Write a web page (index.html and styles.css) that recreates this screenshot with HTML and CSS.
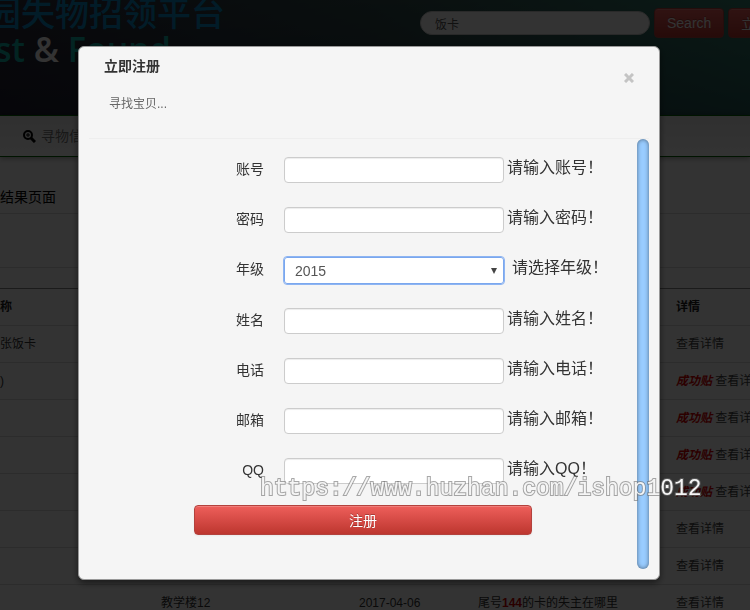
FILE: index.html
```
<!DOCTYPE html>
<html lang="zh-CN">
<head>
  <meta charset="UTF-8">
  <meta name="viewport" content="width=device-width, initial-scale=1.0">
  <title>校园失物招领平台</title>
  <link rel="stylesheet" href="styles.css">
</head>
<body>
  <div class="page">
    <div class="header">
      <div class="logo">
        <div class="logo-cn">园失物招领平台</div>
        <div class="logo-en">st <span>&amp;</span> Found</div>
      </div>
      <form class="search">
        <input type="text" class="search-input" aria-label="搜索" value="饭卡">
        <button type="button" class="btn">Search</button>
        <button type="button" class="btn">立即注册</button>
      </form>
    </div>

    <div class="nav">
      <a href="#">
        <svg width="13" height="13" viewBox="0 0 13 13" fill="none" stroke="#000" stroke-width="2">
          <circle cx="5" cy="5" r="4"/>
          <path d="M8 8l4 4" stroke-width="3"/>
          <path d="M5 3v4M3 5h4" stroke-width="1"/>
        </svg>
        寻物信息
      </a>
    </div>

    <h3 class="page-title">结果页面</h3>
    <div class="filter"></div>

    <table class="list">
      <thead>
        <tr><th class="col-name">称</th><th class="col-place"></th><th class="col-date"></th><th class="col-title"></th><th>详情</th></tr>
      </thead>
      <tbody>
        <tr><td>张饭卡</td><td></td><td></td><td></td><td><a href="#">查看详情</a></td></tr>
        <tr><td>)</td><td></td><td></td><td></td><td><em>成功贴</em> <a href="#">查看详情</a></td></tr>
        <tr><td></td><td></td><td></td><td></td><td><em>成功贴</em> <a href="#">查看详情</a></td></tr>
        <tr><td></td><td></td><td></td><td></td><td><em>成功贴</em> <a href="#">查看详情</a></td></tr>
        <tr><td></td><td></td><td></td><td></td><td><em>成功贴</em> <a href="#">查看详情</a></td></tr>
        <tr><td></td><td></td><td></td><td></td><td><a href="#">查看详情</a></td></tr>
        <tr><td></td><td></td><td></td><td></td><td><a href="#">查看详情</a></td></tr>
        <tr><td></td><td>教学楼12</td><td>2017-04-06</td><td>尾号<b>144</b>的卡的失主在哪里</td><td><a href="#">查看详情</a></td></tr>
      </tbody>
    </table>
  </div>

  <!-- 注册弹窗 -->
  <div class="backdrop">
    <div class="modal">
      <div class="modal-header">
        <div>
          <h4>立即注册</h4>
          <p>寻找宝贝...</p>
        </div>
        <button type="button" class="close" aria-label="关闭">
          <svg width="10" height="10" viewBox="0 0 10 10" stroke="#c4c4c4" stroke-width="3">
            <path d="M1 1l8 8M9 1l-8 8"/>
          </svg>
        </button>
      </div>
      <div class="modal-body">
        <form class="register">
          <div class="row">
            <label for="account">账号</label>
            <input type="text" id="account">
            <span class="hint">请输入账号！</span>
          </div>
          <div class="row">
            <label for="password">密码</label>
            <input type="password" id="password">
            <span class="hint">请输入密码！</span>
          </div>
          <div class="row row-select">
            <label for="grade">年级</label>
            <div class="select-box">
              <select id="grade">
                <option>2015</option>
              </select>
            </div>
            <span class="hint">请选择年级！</span>
          </div>
          <div class="row">
            <label for="name">姓名</label>
            <input type="text" id="name">
            <span class="hint">请输入姓名！</span>
          </div>
          <div class="row">
            <label for="phone">电话</label>
            <input type="text" id="phone">
            <span class="hint">请输入电话！</span>
          </div>
          <div class="row">
            <label for="email">邮箱</label>
            <input type="text" id="email">
            <span class="hint">请输入邮箱！</span>
          </div>
          <div class="row">
            <label for="qq">QQ</label>
            <input type="text" id="qq">
            <span class="hint">请输入QQ！</span>
          </div>
          <button type="button" class="btn submit">注册</button>
        </form>
        <div class="scrollbar"></div>
      </div>
    </div>
  </div>

  <div class="watermark">https://www.huzhan.com/ishop1012</div>
</body>
</html>
```

FILE: styles.css
```
* {
  box-sizing: border-box;
}
body {
  margin: 0;
  height: 100vh;
  overflow: hidden;
  background-color: #fff;
  color: #333;
  font-family: "Liberation Sans", "Noto Sans CJK SC", sans-serif;
  font-size: 14px;
  line-height: 20px;
}
h3, h4, p {
  margin: 0;
}
a {
  color: #444;
  text-decoration: none;
}
input, select, button {
  font-family: inherit;
}

.page {
  overflow: hidden;
}
.header {
  display: grid;
  grid-template-columns: 420px 1fr;
  height: 115px;
  overflow: hidden;
  background: linear-gradient(to bottom, rgba(0, 0, 0, 0), rgba(0, 0, 30, .3)), linear-gradient(to right, #2d2d3c, #324b4b 50%, #34806f);
}
.logo {
  width: 225px;
  display: flex;
  flex-flow: column nowrap;
  align-items: flex-end;
  white-space: nowrap;
}
.logo-cn {
  color: #0a8cc8;
  font-family: "Noto Sans CJK SC", sans-serif;
  font-size: 34px;
  font-weight: 500;
  line-height: 24px;
}
.logo-en {
  padding-right: 54px;
  color: #0fb4aa;
  font-family: "Open Sans", sans-serif;
  font-weight: 600;
  font-size: 34px;
  line-height: 50px;
}
.logo-en span {
  color: #fff;
}
.search {
  display: flex;
  align-items: flex-start;
  gap: 4px;
  padding-top: 8px;
}
.search-input {
  flex: 0 0 230px;
  height: 24px;
  margin-top: 3px;
  padding: 0 14px;
  border: 1px solid #ccc;
  border-radius: 15px;
  background-color: #fff;
  color: #555;
  font-size: 12px;
}
.btn {
  flex: none;
  height: 30px;
  padding: 0 12px;
  border: 1px solid #b3423d;
  border-radius: 4px;
  background: linear-gradient(to bottom, #ee5f5b, #bd362f);
  box-shadow: inset 0 1px 0 rgba(255, 255, 255, .2), 0 1px 2px rgba(0, 0, 0, .05);
  color: #fff;
  font-size: 14px;
  text-shadow: 0 -1px 0 rgba(0, 0, 0, .25);
}

.nav {
  height: 42px;
  padding: 0 23px;
  border-top: 1px solid #006400;
  border-bottom: 1px solid #006400;
  background: linear-gradient(to bottom, #eee, #fff);
  box-shadow: 0 1px 6px rgba(0, 0, 0, .4);
}
.nav a {
  display: flex;
  align-items: center;
  gap: 5px;
  height: 40px;
  color: #777;
}
.page-title {
  padding: 30px 0 6px;
  border-bottom: 1px solid #ddd;
  font-size: 14px;
  font-weight: normal;
  color: #000;
}
.filter {
  height: 54px;
  border-bottom: 1px solid #ddd;
  margin-bottom: 20px;
}

.list {
  width: 100%;
  min-width: 750px;
  table-layout: fixed;
  border-collapse: collapse;
  border-top: 1px solid #888;
  font-size: 12px;
  white-space: nowrap;
}
.list th, .list td {
  height: 37px;
  padding: 0;
  border-bottom: 1px solid #ddd;
  text-align: left;
}
.list th {
  color: #222;
}
.col-name {
  width: 161px;
}
.col-place {
  width: 198px;
}
.col-date {
  width: 119px;
}
.col-title {
  width: 198px;
}
.list em {
  color: #d00;
  font-weight: bold;
}
.list b {
  color: #c00;
}

.backdrop {
  position: fixed;
  left: 0;
  top: 0;
  right: 0;
  bottom: 0;
  z-index: 100;
  padding: 46px 90px 30px 78px;
  background-color: rgba(0, 0, 0, .8);
}
.modal {
  border: 1px solid #999;
  border-radius: 6px;
  background-color: #f5f5f5;
  box-shadow: 0 3px 7px rgba(0, 0, 0, .5);
  padding: 9px 10px 10px;
}
.modal-header {
  display: flex;
  justify-content: space-between;
  padding: 0 15px 24px;
  border-bottom: 1px solid #eee;
}
.modal-header h4 {
  font-size: 14px;
}
.modal-header p {
  padding: 18px 5px 0;
  color: #666;
  font-size: 12px;
}
.close {
  align-self: flex-start;
  margin-top: 17px;
  padding: 0;
  border: 0;
  background: none;
}
.close svg {
  display: block;
}
.modal-body {
  display: flex;
}
.register {
  flex: 1;
  display: flex;
  flex-flow: column nowrap;
  gap: 24px;
  padding: 18px 0 34px;
}
.row {
  display: flex;
  align-items: flex-start;
}
.row label {
  width: 175px;
  margin-right: 20px;
  line-height: 24px;
  text-align: right;
}
.row input {
  width: 220px;
  height: 26px;
  padding: 0 6px;
  border: 1px solid #ccc;
  border-radius: 4px;
  background-color: #fff;
  box-shadow: inset 0 1px 1px rgba(0, 0, 0, .075);
}
.select-box {
  position: relative;
  width: 220px;
}
.select-box select {
  display: block;
  width: 100%;
  height: 27px;
  padding: 0 10px;
  border: 1px solid #7aa7ee;
  border-radius: 3px;
  outline: 1px solid #8db4f2;
  background-color: #fff;
  color: #555;
  font-size: 14px;
  appearance: none;
}
.select-box:after {
  content: "";
  position: absolute;
  top: 11px;
  right: 7px;
  border: 3px solid transparent;
  border-top: 6px solid #444;
  border-bottom: 0;
}
.hint {
  margin-left: 3px;
  font-size: 16px;
  line-height: 22px;
  white-space: nowrap;
}
.row-select .hint {
  margin-left: 8px;
}
.submit {
  width: 338px;
  margin: -3px 0 0 105px;
}
.scrollbar {
  width: 12px;
  border-radius: 6px;
  background-color: #99ccff;
  box-shadow: inset 0 0 4px rgba(0, 0, 0, .5);
}

.watermark {
  position: fixed;
  left: 260px;
  top: 474px;
  z-index: 200;
  color: #f5f5f5;
  font-family: "Liberation Mono", monospace;
  font-size: 23px;
  line-height: 30px;
  -webkit-text-stroke: 2px rgba(110, 110, 110, .6);
  paint-order: stroke fill;
  pointer-events: none;
}
```
